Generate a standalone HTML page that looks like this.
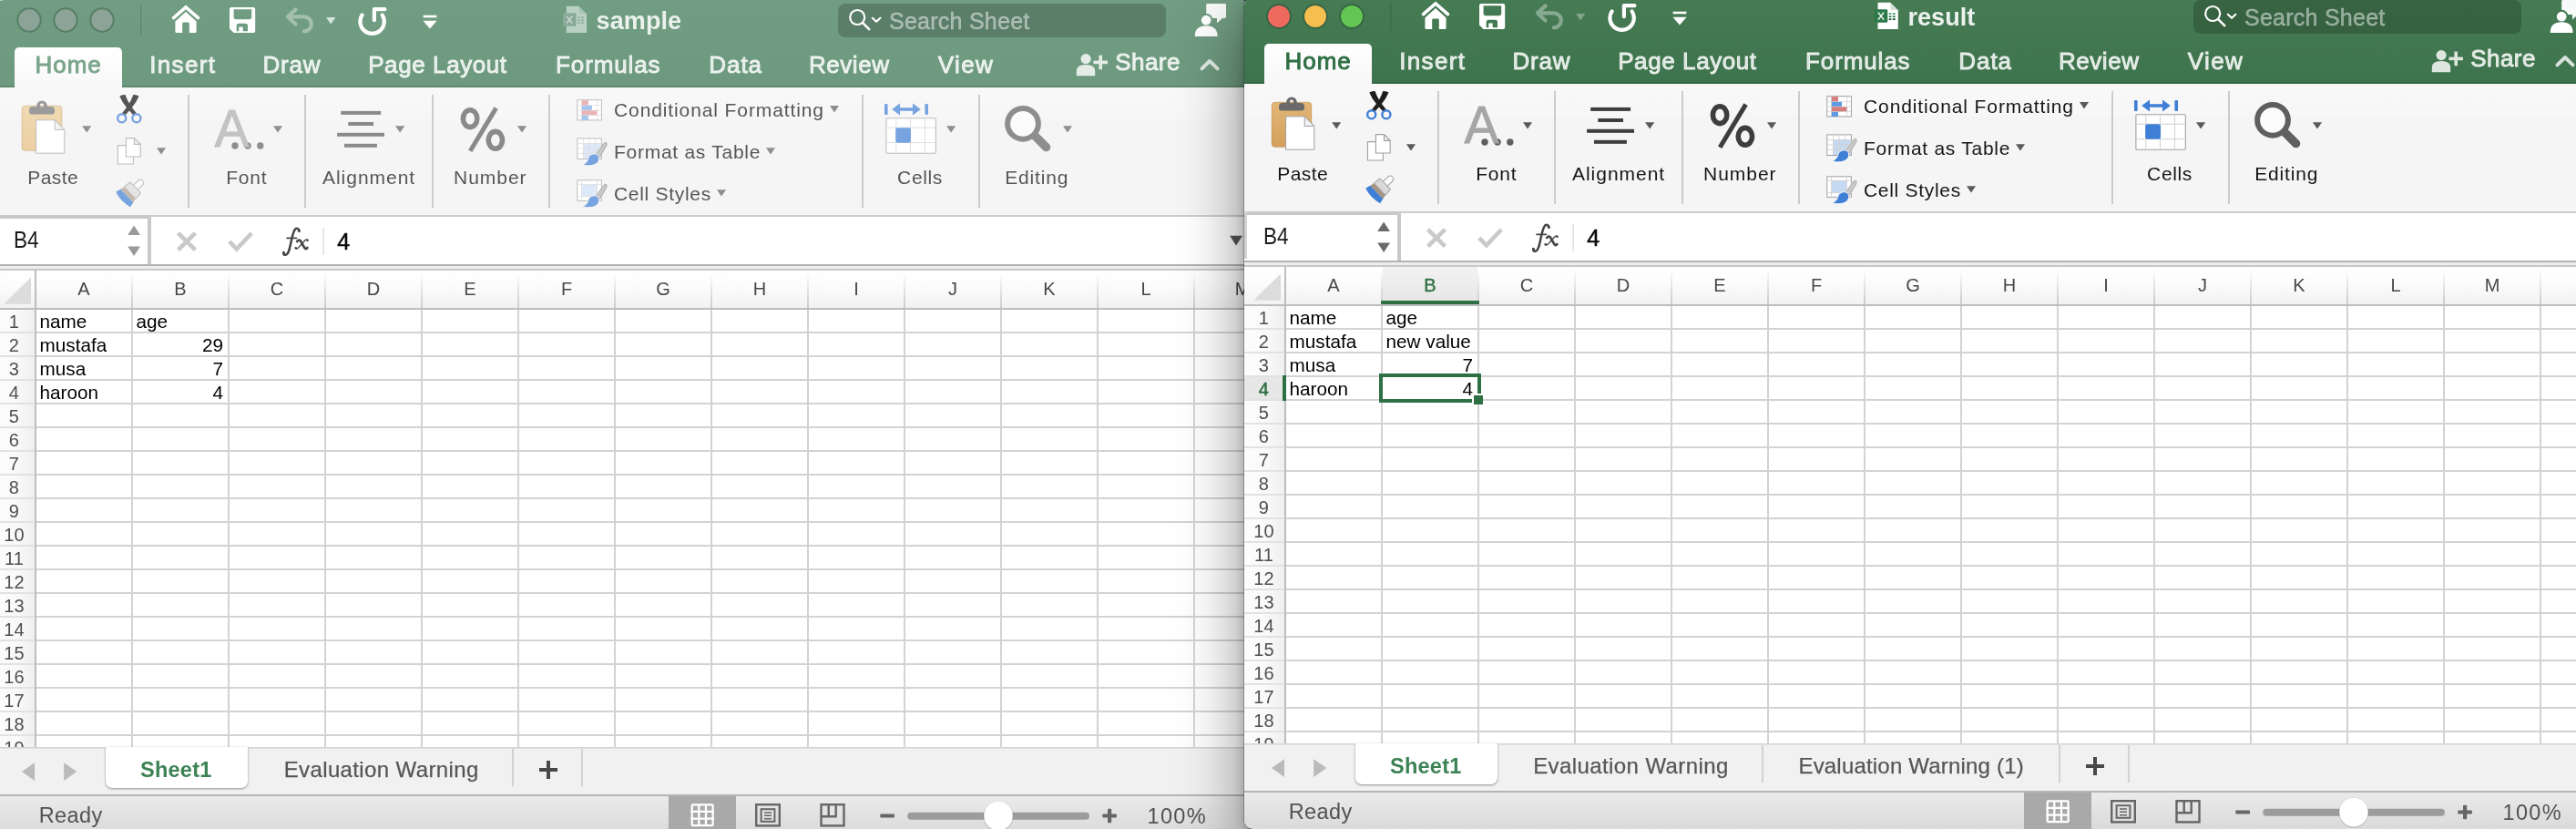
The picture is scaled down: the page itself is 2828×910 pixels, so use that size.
<!DOCTYPE html><html><head><meta charset="utf-8"><title>Excel</title><style>
html,body{margin:0;padding:0}body{width:2828px;height:910px;overflow:hidden;position:relative;background:#262c3a;font-family:"Liberation Sans",sans-serif}
.win{position:absolute;overflow:hidden;border-radius:10px;background:#fff;will-change:transform}
.win div,.win svg{box-sizing:content-box}
</style></head><body>
<div style="position:absolute;left:0;top:0;width:8px;height:8px;background:#e9e9e9"></div>
<div class="win" style="left:-6px;top:0px;width:1378px;height:914px;z-index:1;border-radius:10px 10px 0 0;">
<div style="position:absolute;left:0px;top:0px;width:1378px;height:96px;background:linear-gradient(#719d82,#6d997e);"></div>
<div style="position:absolute;left:0px;top:94px;width:1378px;height:2px;background:rgba(0,0,0,0.10);"></div>
<div style="position:absolute;left:926px;top:4px;width:360px;height:37px;background:rgba(0,0,0,0.19);border-radius:8px;"></div>
<div style="position:absolute;left:22px;top:52px;width:118px;height:45px;background:linear-gradient(#ffffff,#f7f7f7);border-radius:5px 5px 0 0;"></div>
<svg style="position:absolute;left:0;top:0" width="1378" height="96" viewBox="0 0 1378 96"><circle cx="38" cy="22" r="13.7" fill="#577f67"/><circle cx="38" cy="22" r="11.7" fill="#8ca397"/><circle cx="78" cy="22" r="13.7" fill="#577f67"/><circle cx="78" cy="22" r="11.7" fill="#8ca397"/><circle cx="118" cy="22" r="13.7" fill="#577f67"/><circle cx="118" cy="22" r="11.7" fill="#8ca397"/><rect x="160" y="6" width="1.3" height="32" fill="rgba(0,0,0,0.13)"/><path d="M196.5 19.6L210 7.9L223.5 19.6" fill="none" stroke="#ffffff" stroke-width="3.6" stroke-linecap="round" stroke-linejoin="miter"/><path d="M198.4 34.5V23.4L210 12.9L221.6 23.4V34.5Q221.6 36 220.1 36H213.8V26Q213.8 24.6 212.4 24.6H207.6Q206.2 24.6 206.2 26V36H199.9Q198.4 36 198.4 34.5Z" fill="#ffffff"/><path fill-rule="evenodd" d="M260 8H284.2Q286.2 8 286.2 10V34Q286.2 36 284.2 36H262.5L258 31.5V10Q258 8 260 8Z M262.6 10.2V18.6Q262.6 21.2 265.2 21.2H279.6Q282.2 21.2 282.2 18.6V10.2Z M265.7 34.2V28.4Q265.7 25.8 268.3 25.8H275.4Q278 25.8 278 28.4V34.2H272.7V29.6H268.3V34.2Z" fill="#ffffff"/><g opacity="0.36" fill="none" stroke="#ffffff" stroke-width="4.2" stroke-linecap="round" stroke-linejoin="round"><path d="M330.6 10.4L322 18.4L330.6 26.6M323 18.4H339.8A8 8 0 0 1 339.8 34.4"/></g><path d="M364 19H374.3L369.15 26.6Z" fill="#ffffff" fill-opacity="0.72"/><g fill="none" stroke="#ffffff" stroke-width="4.2" stroke-linecap="round" stroke-linejoin="round"><path d="M403.6 16.4A13.2 13.2 0 1 0 425.6 16.4"/><path d="M416.9 22.2V10.2H428.4"/></g><rect x="470.6" y="16.7" width="14.8" height="2.6" fill="#ffffff"/><path d="M470.4 22.8H485.6L478 31.6Z" fill="#ffffff"/><g fill="none" stroke="#ffffff" stroke-linecap="round"><circle cx="947.2" cy="19" r="8" stroke-width="2.2"/><path d="M953.2 25.2L960.2 32.2" stroke-width="2.6"/><path d="M963.8 19.8L968.1 23.8L972.4 19.8" stroke-width="2.2" stroke-linejoin="round"/></g><path d="M1331.6 4H1350.6Q1352 4 1352 5.4V18.5Q1352 19.9 1350.6 19.9H1348L1342 25.4V19.9H1331.6Q1330.2 19.9 1330.2 18.5V5.4Q1330.2 4 1331.6 4Z" fill="#ffffff" fill-opacity="0.96"/><circle cx="1330.2" cy="22.2" r="6.4" fill="#ffffff" stroke="#6f9b80" stroke-width="2"/><path d="M1317.7 39.9Q1317.7 28.2 1330.2 28.2Q1342.6 28.2 1342.6 39.9Z" fill="#ffffff"/><g fill="#ffffff" opacity="0.82"><circle cx="1198.1" cy="64.6" r="5.6"/><path d="M1187.8 83.2V78Q1187.8 71 1198.1 71Q1208.2 71 1208.2 78V83.2Z"/><rect x="1206.4" y="66.6" width="15.6" height="3.6"/><rect x="1212.4" y="60.6" width="3.6" height="15.6"/></g><path d="M1325.4 75.4L1334 67L1342.6 75.4" fill="none" stroke="#ffffff" stroke-opacity="0.8" stroke-width="3.9" stroke-linecap="round" stroke-linejoin="round"/><path d="M627.7249921875 6.8H641.5249921875001L650.0249921875001 15.3V36H627.7249921875Z" fill="#b9d1c3"/><path d="M641.5249921875001 6.8V15.3H650.0249921875001Z" fill="#6f9b80" fill-opacity="0.22"/><rect x="623.9249921875" y="14.2" width="14.6" height="14.6" rx="1.4" fill="#8aa999"/><path d="M628.1249921875001 17.6L634.3249921875 25.6M634.3249921875 17.6L628.1249921875001 25.6" stroke="#c9dbd0" stroke-width="1.5" fill="none"/><rect x="640.0" y="18.3" width="2.6" height="1.7" fill="#8fb09e"/><rect x="644.0" y="18.3" width="2.9" height="1.7" fill="#8fb09e"/><rect x="640.0" y="21.4" width="2.6" height="1.7" fill="#8fb09e"/><rect x="644.0" y="21.4" width="2.9" height="1.7" fill="#8fb09e"/><rect x="640.0" y="24.3" width="2.6" height="1.7" fill="#8fb09e"/><rect x="644.0" y="24.3" width="2.9" height="1.7" fill="#8fb09e"/></svg>
<div style="position:absolute;top:9.94px;font:700 27px/27px 'Liberation Sans',sans-serif;color:rgba(255,255,255,0.86);white-space:nowrap;letter-spacing:0.080px;left:660.62px;">sample</div>
<div style="position:absolute;top:10.84px;font:400 25px/25px 'Liberation Sans',sans-serif;color:rgba(255,255,255,0.45);white-space:nowrap;letter-spacing:0.255px;-webkit-text-stroke:0.4px rgba(255,255,255,0.45);left:982.00px;">Search Sheet</div>
<div style="position:absolute;top:57.99px;font:400 26px/26px 'Liberation Sans',sans-serif;color:#7ba58b;white-space:nowrap;letter-spacing:0.948px;-webkit-text-stroke:0.9px #7ba58b;left:44.60px;">Home</div>
<div style="position:absolute;top:57.99px;font:400 26px/26px 'Liberation Sans',sans-serif;color:rgba(255,255,255,0.80);white-space:nowrap;letter-spacing:1.335px;-webkit-text-stroke:0.9px rgba(255,255,255,0.80);left:170.20px;">Insert</div>
<div style="position:absolute;top:57.99px;font:400 26px/26px 'Liberation Sans',sans-serif;color:rgba(255,255,255,0.80);white-space:nowrap;letter-spacing:0.810px;-webkit-text-stroke:0.9px rgba(255,255,255,0.80);left:294.50px;">Draw</div>
<div style="position:absolute;top:57.99px;font:400 26px/26px 'Liberation Sans',sans-serif;color:rgba(255,255,255,0.80);white-space:nowrap;letter-spacing:0.589px;-webkit-text-stroke:0.9px rgba(255,255,255,0.80);left:410.20px;">Page Layout</div>
<div style="position:absolute;top:57.99px;font:400 26px/26px 'Liberation Sans',sans-serif;color:rgba(255,255,255,0.80);white-space:nowrap;letter-spacing:0.864px;-webkit-text-stroke:0.9px rgba(255,255,255,0.80);left:616.10px;">Formulas</div>
<div style="position:absolute;top:57.99px;font:400 26px/26px 'Liberation Sans',sans-serif;color:rgba(255,255,255,0.80);white-space:nowrap;letter-spacing:0.927px;-webkit-text-stroke:0.9px rgba(255,255,255,0.80);left:784.30px;">Data</div>
<div style="position:absolute;top:57.99px;font:400 26px/26px 'Liberation Sans',sans-serif;color:rgba(255,255,255,0.80);white-space:nowrap;letter-spacing:0.570px;-webkit-text-stroke:0.9px rgba(255,255,255,0.80);left:893.90px;">Review</div>
<div style="position:absolute;top:57.99px;font:400 26px/26px 'Liberation Sans',sans-serif;color:rgba(255,255,255,0.80);white-space:nowrap;letter-spacing:1.438px;-webkit-text-stroke:0.9px rgba(255,255,255,0.80);left:1035.70px;">View</div>
<div style="position:absolute;top:54.79px;font:400 26px/26px 'Liberation Sans',sans-serif;color:rgba(255,255,255,0.80);white-space:nowrap;letter-spacing:0.455px;-webkit-text-stroke:0.9px rgba(255,255,255,0.80);left:1230.20px;">Share</div>
<div style="position:absolute;left:0px;top:96px;width:1378px;height:140px;background:linear-gradient(#f8f8f8 0%,#f7f7f7 24%,#f5f5f5 26%,#f5f5f5 100%);"></div>
<svg style="position:absolute;left:0;top:96px" width="1378" height="140" viewBox="0 96 1378 140"><defs><linearGradient id="tan0" x1="0" y1="0" x2="0" y2="1"><stop offset="0" stop-color="#f0d9b2"/><stop offset="1" stop-color="#ebcfa2"/></linearGradient></defs><rect x="212" y="104" width="2" height="124" fill="#cccccc"/><rect x="340" y="104" width="2" height="124" fill="#cccccc"/><rect x="480" y="104" width="2" height="124" fill="#cccccc"/><rect x="608" y="104" width="2" height="124" fill="#cccccc"/><rect x="952" y="104" width="2" height="124" fill="#cccccc"/><rect x="1080" y="104" width="2" height="124" fill="#cccccc"/><rect x="30" y="116" width="44" height="49.6" rx="4" fill="url(#tan0)" stroke="rgba(120,80,20,0.18)" stroke-width="1"/><path fill-rule="evenodd" d="M38 121Q38 117 42 117H46Q46.5 110.4 52 110.4Q57.5 110.4 58 117H62Q66 117 66 121V122.5Q66 125.5 63 125.5H41Q38 125.5 38 122.5Z M52 113.4A2.1 2.1 0 1 0 52 117.6A2.1 2.1 0 1 0 52 113.4Z" fill="#9b9b9b"/><path d="M45.6 131.8H66.2L76.8 142.4V168.2H45.6Z" fill="#ffffff" stroke="#bdbdbd" stroke-width="1"/><path d="M66.2 131.8V142.4H76.8Z" fill="#f2f2f2" stroke="#bdbdbd" stroke-width="1" stroke-linejoin="round"/><path d="M96.2 138.2H106.2L101.2 145.6Z" fill="#8e8e8e"/><path d="M137.3 105.6Q140 103.600 143.5 104Q145.800 110.600 149.5 116.2L156 124.600L152.800 127L145.5 118.800Q140 112.600 137.3 105.6Z" fill="#555555"/><path d="M158.5 105.6Q155.800 103.600 152.3 104Q150 110.600 146.3 116.2L139.800 124.600L143 127L150.3 118.800Q155.800 112.600 158.5 105.6Z" fill="#555555"/><circle cx="139.7" cy="129.8" r="4.55" fill="none" stroke="#77a3e0" stroke-width="2.4"/><circle cx="155.9" cy="129.8" r="4.55" fill="none" stroke="#77a3e0" stroke-width="2.4"/><path d="M135.4 159.6H152.4V180H135.4Z" fill="#ffffff" stroke="#bdbdbd" stroke-width="1.1"/><path d="M144.4 151.6H153.4L160.2 158.4V172H144.4Z" fill="#ffffff" stroke="#bdbdbd" stroke-width="1.1"/><path d="M153.4 151.6V158.4H160.2Z" fill="#f0f0f0" stroke="#bdbdbd" stroke-width="1.1" stroke-linejoin="round"/><path d="M178 162.2H188L183.0 169.6Z" fill="#8e8e8e"/><g transform="translate(148.6 211.8) rotate(46)"><rect x="-3.4" y="-19.5" width="6.8" height="13" rx="3.4" fill="#fbfbfb" stroke="#bdbdbd" stroke-width="1"/><path d="M-7.4 -8.6H7.4Q8.4 -8.6 8.5 -7.6L9 0H-9L-8.5 -7.6Q-8.4 -8.6 -7.4 -8.6Z" fill="#e4e4e4" stroke="#bdbdbd" stroke-width="1"/><path d="M-9 0H9L10.2 4.6H-10.2Z" fill="#c4baae"/><path d="M-10.2 4.6H10.2L11.4 10.4Q0 13.8 -11.4 10.4Z" fill="#77a3e0"/></g><rect x="380.2" y="121.9" width="43.9" height="4" fill="#8a8a8a"/><rect x="388.3" y="134" width="27.7" height="4" fill="#8a8a8a"/><rect x="376.1" y="145.8" width="51.9" height="4" fill="#8a8a8a"/><rect x="384" y="157.8" width="35.9" height="4" fill="#8a8a8a"/><path d="M440 138.2H450.3L445.15 145.6Z" fill="#8e8e8e"/><circle cx="264" cy="160" r="5" fill="#f5f5f5"/><circle cx="264" cy="160" r="3.7" fill="#8e8e8e"/><circle cx="278" cy="160" r="5" fill="#f5f5f5"/><circle cx="278" cy="160" r="3.7" fill="#8e8e8e"/><circle cx="291.8" cy="160" r="5" fill="#f5f5f5"/><circle cx="291.8" cy="160" r="3.7" fill="#8e8e8e"/><path d="M306 138.2H316L311.0 145.6Z" fill="#8e8e8e"/><g fill="none" stroke="#8a8a8a"><ellipse cx="522.1" cy="130.2" rx="7.7" ry="9.4" stroke-width="5.6"/><ellipse cx="549.9" cy="153.8" rx="7.7" ry="9.4" stroke-width="5.6"/><path d="M550.6 118.6L522.2 165.8" stroke-width="5"/></g><path d="M574 138.2H584L579.0 145.6Z" fill="#8e8e8e"/><rect x="639.8" y="109.7" width="26.6" height="22.2" fill="#ffffff" stroke="#bdbdbd" stroke-width="1"/><rect x="644.4" y="110.20" width="7.6" height="5.45" fill="#ebb4b4"/><rect x="644.4" y="115.65" width="11.6" height="5.45" fill="#a6c5ee"/><rect x="644.4" y="121.10" width="17.3" height="5.45" fill="#ebb4b4"/><rect x="644.4" y="126.55" width="7.6" height="5.45" fill="#a6c5ee"/><rect x="640.3" y="115.25" width="25.6" height="0.8" fill="#dedede" fill-opacity="0.8"/><rect x="640.3" y="120.70" width="25.6" height="0.8" fill="#dedede" fill-opacity="0.8"/><rect x="640.3" y="126.15" width="25.6" height="0.8" fill="#dedede" fill-opacity="0.8"/><rect x="644.0" y="110.2" width="0.8" height="21.2" fill="#dedede" fill-opacity="0.9"/><rect x="661.4" y="110.2" width="0.8" height="21.2" fill="#dedede" fill-opacity="0.9"/><path d="M917 116H927L922.0 123.4Z" fill="#8e8e8e"/><rect x="639.8" y="151.9" width="26.6" height="22.6" fill="#ffffff" stroke="#bdbdbd" stroke-width="1"/><rect x="646.6" y="157.4" width="19.3" height="16.6" fill="#dde8f8"/><rect x="646.2" y="152.4" width="0.8" height="21.6" fill="#dedede"/><rect x="652.6" y="152.4" width="0.8" height="21.6" fill="#dedede"/><rect x="659.0" y="152.4" width="0.8" height="21.6" fill="#dedede"/><rect x="640.3" y="157.0" width="25.6" height="0.8" fill="#dedede"/><rect x="640.3" y="162.5" width="25.6" height="0.8" fill="#dedede"/><rect x="640.3" y="168.0" width="25.6" height="0.8" fill="#dedede"/><path d="M659.2 170.8L668.4 157.8Q670.4 155.6 671.6 156.6Q672.8 157.8 671.6 160.20000000000002L663.6 173.8Z" fill="#cfcfcf" stroke="#f5f5f5" stroke-width="1.4"/><path d="M659.2 170.8L668.4 157.8Q670.4 155.6 671.6 156.6Q672.8 157.8 671.6 160.20000000000002L663.6 173.8Z" fill="#c9c9c9" stroke="#9c9c9c" stroke-width="0.8"/><path d="M645 181.0Q650.6 179.0 651.6 174.4Q652.800 169.0 658.6 168.8Q663.6 169.20000000000002 663.8 174.0Q663.400 180.0 655.6 181.6Q650.2 182.4 645 181.0Z" fill="#77a3e0" stroke="#f5f5f5" stroke-width="1"/><rect x="639.8" y="197.8" width="26.6" height="22.6" fill="#ffffff" stroke="#bdbdbd" stroke-width="1"/><rect x="644.6" y="202.3" width="17" height="13.4" fill="#dde8f8"/><rect x="644.2" y="198.3" width="0.8" height="21.6" fill="#dedede"/><rect x="661.2" y="198.3" width="0.8" height="21.6" fill="#dedede"/><rect x="640.3" y="201.9" width="25.6" height="0.8" fill="#dedede"/><rect x="640.3" y="215.3" width="25.6" height="0.8" fill="#dedede"/><path d="M659.2 216.70000000000002L668.4 203.70000000000002Q670.4 201.5 671.6 202.5Q672.8 203.70000000000002 671.6 206.10000000000002L663.6 219.70000000000002Z" fill="#cfcfcf" stroke="#f5f5f5" stroke-width="1.4"/><path d="M659.2 216.70000000000002L668.4 203.70000000000002Q670.4 201.5 671.6 202.5Q672.8 203.70000000000002 671.6 206.10000000000002L663.6 219.70000000000002Z" fill="#c9c9c9" stroke="#9c9c9c" stroke-width="0.8"/><path d="M645 226.9Q650.6 224.9 651.6 220.3Q652.800 214.9 658.6 214.70000000000002Q663.6 215.10000000000002 663.8 219.9Q663.400 225.9 655.6 227.5Q650.2 228.3 645 226.9Z" fill="#77a3e0" stroke="#f5f5f5" stroke-width="1"/><path d="M847 162.2H857L852.0 169.5Z" fill="#8e8e8e"/><path d="M793 208.3H803L798.0 215.6Z" fill="#8e8e8e"/><rect x="977" y="114" width="3.6" height="12" rx="1.2" fill="#77a3e0"/><rect x="1021.4" y="114" width="3.6" height="12" rx="1.2" fill="#77a3e0"/><path d="M985.2 120L994 113.6V118.2H1008V113.6L1016.8 120L1008 126.4V121.8H994V126.4Z" fill="#77a3e0"/><rect x="978.9" y="129.8" width="54.4" height="38.4" rx="1" fill="#ffffff" stroke="#bdbdbd" stroke-width="1.1"/><rect x="989.3" y="130.4" width="1" height="37.2" fill="#dedede"/><rect x="1004.9" y="130.4" width="1" height="37.2" fill="#dedede"/><rect x="1020.9" y="130.4" width="1" height="37.2" fill="#dedede"/><rect x="979.5" y="139.7" width="53.2" height="1" fill="#dedede"/><rect x="979.5" y="156.1" width="53.2" height="1" fill="#dedede"/><rect x="989.2" y="140.2" width="16.8" height="16.6" rx="2.4" fill="#77a3e0"/><path d="M1045 138.2H1055.2L1050.1 145.6Z" fill="#8e8e8e"/><path d="M1141 148L1154.6 161.6" stroke="#8e8e8e" stroke-width="9.4" stroke-linecap="round"/><circle cx="1129" cy="135.8" r="16.9" fill="#fbfbfb" stroke="#8e8e8e" stroke-width="6"/><path d="M1173 138.2H1183L1178.0 145.6Z" fill="#8e8e8e"/></svg>
<div style="position:absolute;top:113.25px;font:400 57px/57px 'Liberation Sans',sans-serif;color:#c3c3c3;white-space:nowrap;-webkit-text-stroke:0.9px #c3c3c3;left:241.60px;">A</div>
<div style="position:absolute;top:184.02px;font:400 21px/21px 'Liberation Sans',sans-serif;color:#565656;white-space:nowrap;letter-spacing:0.475px;left:-335.76px;width:800px;text-align:center;">Paste</div>
<div style="position:absolute;top:184.02px;font:400 21px/21px 'Liberation Sans',sans-serif;color:#565656;white-space:nowrap;letter-spacing:0.793px;left:-123.20px;width:800px;text-align:center;">Font</div>
<div style="position:absolute;top:184.02px;font:400 21px/21px 'Liberation Sans',sans-serif;color:#565656;white-space:nowrap;letter-spacing:0.977px;left:11.09px;width:800px;text-align:center;">Alignment</div>
<div style="position:absolute;top:184.02px;font:400 21px/21px 'Liberation Sans',sans-serif;color:#565656;white-space:nowrap;letter-spacing:0.982px;left:144.29px;width:800px;text-align:center;">Number</div>
<div style="position:absolute;top:184.02px;font:400 21px/21px 'Liberation Sans',sans-serif;color:#565656;white-space:nowrap;letter-spacing:0.631px;left:616.02px;width:800px;text-align:center;">Cells</div>
<div style="position:absolute;top:184.02px;font:400 21px/21px 'Liberation Sans',sans-serif;color:#565656;white-space:nowrap;letter-spacing:0.832px;left:744.22px;width:800px;text-align:center;">Editing</div>
<div style="position:absolute;top:109.97px;font:400 21px/21px 'Liberation Sans',sans-serif;color:#565656;white-space:nowrap;letter-spacing:0.892px;left:680.00px;">Conditional Formatting</div>
<div style="position:absolute;top:155.92px;font:400 21px/21px 'Liberation Sans',sans-serif;color:#565656;white-space:nowrap;letter-spacing:0.730px;left:680.00px;">Format as Table</div>
<div style="position:absolute;top:201.82px;font:400 21px/21px 'Liberation Sans',sans-serif;color:#565656;white-space:nowrap;letter-spacing:0.700px;left:680.00px;">Cell Styles</div>
<div style="position:absolute;left:0px;top:236px;width:1378px;height:54px;background:#ffffff;"></div>
<div style="position:absolute;left:0px;top:236px;width:1378px;height:2px;background:#cdcdcd;"></div>
<div style="position:absolute;left:0px;top:236px;width:172px;height:4px;background:#c8c8c8;"></div>
<div style="position:absolute;left:0px;top:236px;width:2.5px;height:52px;background:#d2d2d2;"></div>
<div style="position:absolute;left:168px;top:238px;width:4px;height:52px;background:#c8c8c8;"></div>
<div style="position:absolute;left:0px;top:290px;width:1378px;height:2px;background:#b3b3b3;"></div>
<div style="position:absolute;left:0px;top:292px;width:1378px;height:3px;background:#ededed;"></div>
<div style="position:absolute;left:0px;top:295px;width:1378px;height:2px;background:#c8c8c8;"></div>
<svg style="position:absolute;left:0;top:238px" width="1378" height="52" viewBox="0 238 1378 52"><path d="M146.2 258L153.1 247.4L160 258Z" fill="#9a9a9a"/><path d="M146.2 270.4H160L153.1 281Z" fill="#9a9a9a"/><path d="M201.6 255.800L220.4 274.400M220.4 255.800L201.6 274.400" stroke="#c9c9c9" stroke-width="4.6" fill="none"/><path d="M257.8 265.2L265.8 273.4L282.2 256" stroke="#c9c9c9" stroke-width="4.6" fill="none"/><g fill="none" stroke="#454545" stroke-linecap="round" stroke-linejoin="round"><path d="M334.4 253.4C334.2 250.6 331 249.8 329.400 252.6C327.2 256.6 326.3 262 325 268C323.7 274 322.6 279.400 319.5 279.800C317.7 280 316.800 278.600 317.400 277.400" stroke-width="2.5"/><path d="M321 261.300H331.400" stroke-width="1.7"/><path d="M332.2 265C333.800 262.600 335.600 263.200 336.800 265.800L339.800 271.200C341 273.600 342.200 273.800 343.400 272" stroke-width="2.7"/><path d="M343.600 263.600C342.600 262.500 341.300 263 340 264.800L333.800 271.600C332.500 273.200 331.300 273.600 330.600 272.400" stroke-width="1.4"/></g><g fill="#454545"><circle cx="334.300" cy="253.500" r="1.500"/><circle cx="317.500" cy="277.300" r="1.500"/><circle cx="343.500" cy="263.700" r="1.300"/><circle cx="330.700" cy="272.300" r="1.300"/></g><rect x="360.4" y="250" width="1.4" height="30" fill="#dcdcdc"/><path d="M1356.1 258.800H1370L1363.05 269.6Z" fill="#555555"/></svg>
<div style="position:absolute;top:251.14px;font:400 25px/25px 'Liberation Sans',sans-serif;color:#1a1a1a;white-space:nowrap;left:20.70px;transform:scaleX(0.905);transform-origin:0 0;">B4</div>
<div style="position:absolute;top:252.54px;font:400 25px/25px 'Liberation Sans',sans-serif;color:#0a0a0a;white-space:nowrap;-webkit-text-stroke:0.5px #0a0a0a;left:376.20px;">4</div>
<div style="position:absolute;left:0;top:297px;width:1378px;height:523px;overflow:hidden;background:#fff">
<div style="position:absolute;left:0px;top:0px;width:1378px;height:41px;background:linear-gradient(#ffffff 0%,#fcfcfc 40%,#f2f2f2 100%);"></div>
<div style="position:absolute;left:44px;top:41px;width:1334px;height:482px;background-color:#fff;background-image:linear-gradient(to right,#d3d3d3 2px,transparent 2px),linear-gradient(to bottom,#d3d3d3 2px,transparent 2px);background-size:106px 100%,100% 26px;"></div>
<div style="position:absolute;left:0;top:43px;width:44px;height:480px;background-image:linear-gradient(to bottom,transparent 24px,#e2e2e2 24px),linear-gradient(to right,#fdfdfd 0%,#f9f9f9 55%,#efefef 100%);background-size:100% 26px,100% 100%;"></div>
<div style="position:absolute;left:150px;top:2px;width:2px;height:39px;background:linear-gradient(rgba(200,200,200,0) 0%,rgba(200,200,200,0.9) 100%);"></div>
<div style="position:absolute;left:256px;top:2px;width:2px;height:39px;background:linear-gradient(rgba(200,200,200,0) 0%,rgba(200,200,200,0.9) 100%);"></div>
<div style="position:absolute;left:362px;top:2px;width:2px;height:39px;background:linear-gradient(rgba(200,200,200,0) 0%,rgba(200,200,200,0.9) 100%);"></div>
<div style="position:absolute;left:468px;top:2px;width:2px;height:39px;background:linear-gradient(rgba(200,200,200,0) 0%,rgba(200,200,200,0.9) 100%);"></div>
<div style="position:absolute;left:574px;top:2px;width:2px;height:39px;background:linear-gradient(rgba(200,200,200,0) 0%,rgba(200,200,200,0.9) 100%);"></div>
<div style="position:absolute;left:680px;top:2px;width:2px;height:39px;background:linear-gradient(rgba(200,200,200,0) 0%,rgba(200,200,200,0.9) 100%);"></div>
<div style="position:absolute;left:786px;top:2px;width:2px;height:39px;background:linear-gradient(rgba(200,200,200,0) 0%,rgba(200,200,200,0.9) 100%);"></div>
<div style="position:absolute;left:892px;top:2px;width:2px;height:39px;background:linear-gradient(rgba(200,200,200,0) 0%,rgba(200,200,200,0.9) 100%);"></div>
<div style="position:absolute;left:998px;top:2px;width:2px;height:39px;background:linear-gradient(rgba(200,200,200,0) 0%,rgba(200,200,200,0.9) 100%);"></div>
<div style="position:absolute;left:1104px;top:2px;width:2px;height:39px;background:linear-gradient(rgba(200,200,200,0) 0%,rgba(200,200,200,0.9) 100%);"></div>
<div style="position:absolute;left:1210px;top:2px;width:2px;height:39px;background:linear-gradient(rgba(200,200,200,0) 0%,rgba(200,200,200,0.9) 100%);"></div>
<div style="position:absolute;left:1316px;top:2px;width:2px;height:39px;background:linear-gradient(rgba(200,200,200,0) 0%,rgba(200,200,200,0.9) 100%);"></div>
<div style="position:absolute;left:1422px;top:2px;width:2px;height:39px;background:linear-gradient(rgba(200,200,200,0) 0%,rgba(200,200,200,0.9) 100%);"></div>
<div style="position:absolute;left:0px;top:41px;width:1378px;height:2px;background:#bdbdbd;"></div>
<div style="position:absolute;left:44px;top:0px;width:2px;height:523px;background:#bdbdbd;"></div>
<svg style="position:absolute;left:0;top:0" width="46" height="41" viewBox="0 297 46 41"><path d="M40 304.6V333.800H10Z" fill="#dcdcdc"/></svg>
<div style="position:absolute;top:9.87px;font:400 20px/20px 'Liberation Sans',sans-serif;color:#484848;white-space:nowrap;left:-302.00px;width:800px;text-align:center;">A</div>
<div style="position:absolute;top:9.87px;font:400 20px/20px 'Liberation Sans',sans-serif;color:#484848;white-space:nowrap;left:-196.00px;width:800px;text-align:center;">B</div>
<div style="position:absolute;top:9.87px;font:400 20px/20px 'Liberation Sans',sans-serif;color:#484848;white-space:nowrap;left:-90.00px;width:800px;text-align:center;">C</div>
<div style="position:absolute;top:9.87px;font:400 20px/20px 'Liberation Sans',sans-serif;color:#484848;white-space:nowrap;left:16.00px;width:800px;text-align:center;">D</div>
<div style="position:absolute;top:9.87px;font:400 20px/20px 'Liberation Sans',sans-serif;color:#484848;white-space:nowrap;left:122.00px;width:800px;text-align:center;">E</div>
<div style="position:absolute;top:9.87px;font:400 20px/20px 'Liberation Sans',sans-serif;color:#484848;white-space:nowrap;left:228.00px;width:800px;text-align:center;">F</div>
<div style="position:absolute;top:9.87px;font:400 20px/20px 'Liberation Sans',sans-serif;color:#484848;white-space:nowrap;left:334.00px;width:800px;text-align:center;">G</div>
<div style="position:absolute;top:9.87px;font:400 20px/20px 'Liberation Sans',sans-serif;color:#484848;white-space:nowrap;left:440.00px;width:800px;text-align:center;">H</div>
<div style="position:absolute;top:9.87px;font:400 20px/20px 'Liberation Sans',sans-serif;color:#484848;white-space:nowrap;left:546.00px;width:800px;text-align:center;">I</div>
<div style="position:absolute;top:9.87px;font:400 20px/20px 'Liberation Sans',sans-serif;color:#484848;white-space:nowrap;left:652.00px;width:800px;text-align:center;">J</div>
<div style="position:absolute;top:9.87px;font:400 20px/20px 'Liberation Sans',sans-serif;color:#484848;white-space:nowrap;left:758.00px;width:800px;text-align:center;">K</div>
<div style="position:absolute;top:9.87px;font:400 20px/20px 'Liberation Sans',sans-serif;color:#484848;white-space:nowrap;left:864.00px;width:800px;text-align:center;">L</div>
<div style="position:absolute;top:9.87px;font:400 20px/20px 'Liberation Sans',sans-serif;color:#484848;white-space:nowrap;left:970.00px;width:800px;text-align:center;">M</div>
<div style="position:absolute;top:9.87px;font:400 20px/20px 'Liberation Sans',sans-serif;color:#484848;white-space:nowrap;left:1076.00px;width:800px;text-align:center;">N</div>
<div style="position:absolute;top:46.47px;font:400 20px/20px 'Liberation Sans',sans-serif;color:#4f4f4f;white-space:nowrap;left:-378.60px;width:800px;text-align:center;">1</div>
<div style="position:absolute;top:72.47px;font:400 20px/20px 'Liberation Sans',sans-serif;color:#4f4f4f;white-space:nowrap;left:-378.60px;width:800px;text-align:center;">2</div>
<div style="position:absolute;top:98.47px;font:400 20px/20px 'Liberation Sans',sans-serif;color:#4f4f4f;white-space:nowrap;left:-378.60px;width:800px;text-align:center;">3</div>
<div style="position:absolute;top:124.47px;font:400 20px/20px 'Liberation Sans',sans-serif;color:#4f4f4f;white-space:nowrap;left:-378.60px;width:800px;text-align:center;">4</div>
<div style="position:absolute;top:150.47px;font:400 20px/20px 'Liberation Sans',sans-serif;color:#4f4f4f;white-space:nowrap;left:-378.60px;width:800px;text-align:center;">5</div>
<div style="position:absolute;top:176.47px;font:400 20px/20px 'Liberation Sans',sans-serif;color:#4f4f4f;white-space:nowrap;left:-378.60px;width:800px;text-align:center;">6</div>
<div style="position:absolute;top:202.47px;font:400 20px/20px 'Liberation Sans',sans-serif;color:#4f4f4f;white-space:nowrap;left:-378.60px;width:800px;text-align:center;">7</div>
<div style="position:absolute;top:228.47px;font:400 20px/20px 'Liberation Sans',sans-serif;color:#4f4f4f;white-space:nowrap;left:-378.60px;width:800px;text-align:center;">8</div>
<div style="position:absolute;top:254.47px;font:400 20px/20px 'Liberation Sans',sans-serif;color:#4f4f4f;white-space:nowrap;left:-378.60px;width:800px;text-align:center;">9</div>
<div style="position:absolute;top:280.47px;font:400 20px/20px 'Liberation Sans',sans-serif;color:#4f4f4f;white-space:nowrap;left:-378.60px;width:800px;text-align:center;">10</div>
<div style="position:absolute;top:306.47px;font:400 20px/20px 'Liberation Sans',sans-serif;color:#4f4f4f;white-space:nowrap;left:-378.60px;width:800px;text-align:center;">11</div>
<div style="position:absolute;top:332.47px;font:400 20px/20px 'Liberation Sans',sans-serif;color:#4f4f4f;white-space:nowrap;left:-378.60px;width:800px;text-align:center;">12</div>
<div style="position:absolute;top:358.47px;font:400 20px/20px 'Liberation Sans',sans-serif;color:#4f4f4f;white-space:nowrap;left:-378.60px;width:800px;text-align:center;">13</div>
<div style="position:absolute;top:384.47px;font:400 20px/20px 'Liberation Sans',sans-serif;color:#4f4f4f;white-space:nowrap;left:-378.60px;width:800px;text-align:center;">14</div>
<div style="position:absolute;top:410.47px;font:400 20px/20px 'Liberation Sans',sans-serif;color:#4f4f4f;white-space:nowrap;left:-378.60px;width:800px;text-align:center;">15</div>
<div style="position:absolute;top:436.47px;font:400 20px/20px 'Liberation Sans',sans-serif;color:#4f4f4f;white-space:nowrap;left:-378.60px;width:800px;text-align:center;">16</div>
<div style="position:absolute;top:462.47px;font:400 20px/20px 'Liberation Sans',sans-serif;color:#4f4f4f;white-space:nowrap;left:-378.60px;width:800px;text-align:center;">17</div>
<div style="position:absolute;top:488.47px;font:400 20px/20px 'Liberation Sans',sans-serif;color:#4f4f4f;white-space:nowrap;left:-378.60px;width:800px;text-align:center;">18</div>
<div style="position:absolute;top:514.47px;font:400 20px/20px 'Liberation Sans',sans-serif;color:#4f4f4f;white-space:nowrap;left:-378.60px;width:800px;text-align:center;">19</div>
<div style="position:absolute;top:46.48px;font:400 20.7px/20.7px 'Liberation Sans',sans-serif;color:#000;white-space:nowrap;left:49.60px;">name</div>
<div style="position:absolute;top:46.48px;font:400 20.7px/20.7px 'Liberation Sans',sans-serif;color:#000;white-space:nowrap;left:155.60px;">age</div>
<div style="position:absolute;top:72.48px;font:400 20.7px/20.7px 'Liberation Sans',sans-serif;color:#000;white-space:nowrap;left:49.60px;">mustafa</div>
<div style="position:absolute;top:72.48px;font:400 20.7px/20.7px 'Liberation Sans',sans-serif;color:#000;white-space:nowrap;left:-549.10px;width:800px;text-align:right;">29</div>
<div style="position:absolute;top:98.48px;font:400 20.7px/20.7px 'Liberation Sans',sans-serif;color:#000;white-space:nowrap;left:49.60px;">musa</div>
<div style="position:absolute;top:98.48px;font:400 20.7px/20.7px 'Liberation Sans',sans-serif;color:#000;white-space:nowrap;left:-549.10px;width:800px;text-align:right;">7</div>
<div style="position:absolute;top:124.48px;font:400 20.7px/20.7px 'Liberation Sans',sans-serif;color:#000;white-space:nowrap;left:49.60px;">haroon</div>
<div style="position:absolute;top:124.48px;font:400 20.7px/20.7px 'Liberation Sans',sans-serif;color:#000;white-space:nowrap;left:-549.10px;width:800px;text-align:right;">4</div>
</div>
<div style="position:absolute;left:0px;top:820px;width:1378px;height:52px;background:#f1f1f1;"></div>
<div style="position:absolute;left:0px;top:820px;width:1378px;height:2px;background:linear-gradient(#cfcfcf,#e6e6e6);"></div>
<div style="position:absolute;left:121.5px;top:820px;width:156.8px;height:45px;background:#ffffff;border-radius:0 0 7px 7px;box-shadow:0 1px 2.5px rgba(0,0,0,0.38),0 0 1px rgba(0,0,0,0.25);"></div>

<svg style="position:absolute;left:0;top:820px" width="1378" height="52" viewBox="0 820 1378 52"><path d="M44 837.2V857L30 847.1Z" fill="#bababa"/><path d="M76.2 837.2V857L90.2 847.1Z" fill="#bababa"/></svg>
<div style="position:absolute;top:833.61px;font:700 23.5px/23.5px 'Liberation Sans',sans-serif;color:#3b8254;white-space:nowrap;letter-spacing:0.227px;left:160.10px;">Sheet1</div>
<div style="position:absolute;top:833.18px;font:400 24px/24px 'Liberation Sans',sans-serif;color:#565656;white-space:nowrap;letter-spacing:0.375px;-webkit-text-stroke:0.25px #565656;left:24.69px;width:800px;text-align:center;">Evaluation Warning</div>
<div style="position:absolute;left:568px;top:822px;width:2px;height:41px;background:#d2d2d2;"></div>
<div style="position:absolute;left:598.2px;top:843.2px;width:20px;height:4px;background:#484848;"></div>
<div style="position:absolute;left:606.2px;top:835.2px;width:4px;height:20px;background:#484848;"></div>
<div style="position:absolute;left:643.6px;top:822px;width:2px;height:41px;background:#d2d2d2;"></div>
<div style="position:absolute;left:0px;top:872px;width:1378px;height:42px;background:linear-gradient(#ebebeb,#dadada);"></div>
<div style="position:absolute;left:0px;top:872px;width:1378px;height:2px;background:#b4b4b4;"></div>
<div style="position:absolute;left:740px;top:874px;width:74px;height:40px;background:#a9a9a9;"></div>
<svg style="position:absolute;left:0;top:874px" width="1378" height="40" viewBox="0 874 1378 40"><g fill="none" stroke="#ffffff" stroke-width="2.3"><rect x="765.6999999999999" y="883.3" width="22.9" height="22.9" rx="1"/><path d="M773.3 883V906.5M781.0 883V906.5M764.4 890.9H789.9M764.4 898.6H789.9"/></g><g fill="none" stroke="#666666"><rect x="836.2" y="883.2" width="25.6" height="23.2" stroke-width="2.4"/><rect x="841.6" y="888.2" width="14.8" height="13.6" stroke-width="2"/><path d="M845 891.9H853M845 895.3H853M845 898.7H853" stroke-width="1.5"/></g><g fill="none" stroke="#666666" stroke-width="2.4"><rect x="907.5" y="883.2" width="25" height="23.2"/><path d="M915.6999999999999 883V896.2M923.6999999999999 883V896.2H907.5"/></g><rect x="972.3" y="893.4" width="15.7" height="4.2" rx="1" fill="#666666"/><rect x="1002.2" y="891.8" width="199.8" height="8" rx="4" fill="#9c9c9c"/><circle cx="1102" cy="896.2" r="16.6" fill="rgba(0,0,0,0.12)"/><circle cx="1102" cy="895.6" r="15.8" fill="#ffffff"/><rect x="1216.3" y="893.4" width="15.6" height="4.2" rx="1" fill="#666666"/><rect x="1222" y="887.7" width="4.2" height="15.6" rx="1" fill="#666666"/></svg>
<div style="position:absolute;top:883.91px;font:400 23.5px/23.5px 'Liberation Sans',sans-serif;color:#525252;white-space:nowrap;letter-spacing:0.392px;left:48.70px;">Ready</div>
<div style="position:absolute;top:885.31px;font:400 23.5px/23.5px 'Liberation Sans',sans-serif;color:#525252;white-space:nowrap;letter-spacing:1.332px;left:1265.50px;">100%</div>
</div>
<div class="win" style="left:1366px;top:-4px;width:1494px;height:914px;z-index:2;box-shadow:0 26px 70px rgba(0,0,0,0.46),0 5px 14px rgba(0,0,0,0.18),0 0 0 1px rgba(0,0,0,0.24);">
<div style="position:absolute;left:0px;top:0px;width:1494px;height:96px;background:linear-gradient(#467b54,#3e744d);"></div>
<div style="position:absolute;left:0px;top:94px;width:1494px;height:2px;background:rgba(0,0,0,0.10);"></div>
<div style="position:absolute;left:1042px;top:4px;width:360px;height:37px;background:rgba(0,0,0,0.19);border-radius:8px;"></div>
<div style="position:absolute;left:22px;top:52px;width:118px;height:45px;background:linear-gradient(#ffffff,#f7f7f7);border-radius:5px 5px 0 0;"></div>
<svg style="position:absolute;left:0;top:0" width="1494" height="96" viewBox="0 0 1494 96"><circle cx="38" cy="22" r="13.7" fill="rgba(0,0,0,0.2)"/><circle cx="38" cy="22" r="12" fill="#ee6a5e"/><circle cx="78" cy="22" r="13.7" fill="rgba(0,0,0,0.2)"/><circle cx="78" cy="22" r="12" fill="#f5bf4f"/><circle cx="118" cy="22" r="13.7" fill="rgba(0,0,0,0.2)"/><circle cx="118" cy="22" r="12" fill="#62c554"/><rect x="160" y="6" width="1.3" height="32" fill="rgba(0,0,0,0.13)"/><path d="M196.5 19.6L210 7.9L223.5 19.6" fill="none" stroke="#ffffff" stroke-width="3.6" stroke-linecap="round" stroke-linejoin="miter"/><path d="M198.4 34.5V23.4L210 12.9L221.6 23.4V34.5Q221.6 36 220.1 36H213.8V26Q213.8 24.6 212.4 24.6H207.6Q206.2 24.6 206.2 26V36H199.9Q198.4 36 198.4 34.5Z" fill="#ffffff"/><path fill-rule="evenodd" d="M260 8H284.2Q286.2 8 286.2 10V34Q286.2 36 284.2 36H262.5L258 31.5V10Q258 8 260 8Z M262.6 10.2V18.6Q262.6 21.2 265.2 21.2H279.6Q282.2 21.2 282.2 18.6V10.2Z M265.7 34.2V28.4Q265.7 25.8 268.3 25.8H275.4Q278 25.8 278 28.4V34.2H272.7V29.6H268.3V34.2Z" fill="#ffffff"/><g opacity="0.36" fill="none" stroke="#ffffff" stroke-width="4.2" stroke-linecap="round" stroke-linejoin="round"><path d="M330.6 10.4L322 18.4L330.6 26.6M323 18.4H339.8A8 8 0 0 1 339.8 34.4"/></g><path d="M364 19H374.3L369.15 26.6Z" fill="#ffffff" fill-opacity="0.33"/><g fill="none" stroke="#ffffff" stroke-width="4.2" stroke-linecap="round" stroke-linejoin="round"><path d="M403.6 16.4A13.2 13.2 0 1 0 425.6 16.4"/><path d="M416.9 22.2V10.2H428.4"/></g><rect x="470.6" y="16.7" width="14.8" height="2.6" fill="#ffffff"/><path d="M470.4 22.8H485.6L478 31.6Z" fill="#ffffff"/><g fill="none" stroke="#ffffff" stroke-linecap="round"><circle cx="1063.2" cy="19" r="8" stroke-width="2.2"/><path d="M1069.2 25.2L1076.2 32.2" stroke-width="2.6"/><path d="M1079.8 19.8L1084.1 23.8L1088.4 19.8" stroke-width="2.2" stroke-linejoin="round"/></g><path d="M1447.6 4H1466.6Q1468 4 1468 5.4V18.5Q1468 19.9 1466.6 19.9H1464L1458 25.4V19.9H1447.6Q1446.2 19.9 1446.2 18.5V5.4Q1446.2 4 1447.6 4Z" fill="#ffffff" fill-opacity="0.96"/><circle cx="1446.2" cy="22.2" r="6.4" fill="#ffffff" stroke="#437951" stroke-width="2"/><path d="M1433.7 39.9Q1433.7 28.2 1446.2 28.2Q1458.6 28.2 1458.6 39.9Z" fill="#ffffff"/><g fill="#ffffff" opacity="0.82"><circle cx="1314.1" cy="64.6" r="5.6"/><path d="M1303.8 83.2V78Q1303.8 71 1314.1 71Q1324.2 71 1324.2 78V83.2Z"/><rect x="1322.4" y="66.6" width="15.6" height="3.6"/><rect x="1328.4" y="60.6" width="3.6" height="15.6"/></g><path d="M1441.4 75.4L1450 67L1458.6 75.4" fill="none" stroke="#ffffff" stroke-opacity="0.8" stroke-width="3.9" stroke-linecap="round" stroke-linejoin="round"/><path d="M695.487390625 6.8H709.2873906250001L717.7873906250001 15.3V36H695.487390625Z" fill="#ffffff"/><path d="M709.2873906250001 6.8V15.3H717.7873906250001Z" fill="#437951" fill-opacity="0.22"/><rect x="691.687390625" y="14.2" width="14.6" height="14.6" rx="1.4" fill="#2c7a49"/><path d="M695.8873906250001 17.6L702.087390625 25.6M702.087390625 17.6L695.8873906250001 25.6" stroke="#ffffff" stroke-width="1.5" fill="none"/><rect x="707.8" y="18.3" width="2.6" height="1.7" fill="#3a9d68"/><rect x="711.8" y="18.3" width="2.9" height="1.7" fill="#3a9d68"/><rect x="707.8" y="21.4" width="2.6" height="1.7" fill="#1f7a45"/><rect x="711.8" y="21.4" width="2.9" height="1.7" fill="#1f7a45"/><rect x="707.8" y="24.3" width="2.6" height="1.7" fill="#0f4f2b"/><rect x="711.8" y="24.3" width="2.9" height="1.7" fill="#0f4f2b"/></svg>
<div style="position:absolute;top:9.94px;font:700 27px/27px 'Liberation Sans',sans-serif;color:rgba(255,255,255,0.9);white-space:nowrap;letter-spacing:0.080px;left:728.39px;">result</div>
<div style="position:absolute;top:10.84px;font:400 25px/25px 'Liberation Sans',sans-serif;color:rgba(255,255,255,0.45);white-space:nowrap;letter-spacing:0.255px;-webkit-text-stroke:0.4px rgba(255,255,255,0.45);left:1098.00px;">Search Sheet</div>
<div style="position:absolute;top:57.99px;font:400 26px/26px 'Liberation Sans',sans-serif;color:#2f6f44;white-space:nowrap;letter-spacing:0.948px;-webkit-text-stroke:0.9px #2f6f44;left:44.60px;">Home</div>
<div style="position:absolute;top:57.99px;font:400 26px/26px 'Liberation Sans',sans-serif;color:rgba(255,255,255,0.80);white-space:nowrap;letter-spacing:1.335px;-webkit-text-stroke:0.9px rgba(255,255,255,0.80);left:170.20px;">Insert</div>
<div style="position:absolute;top:57.99px;font:400 26px/26px 'Liberation Sans',sans-serif;color:rgba(255,255,255,0.80);white-space:nowrap;letter-spacing:0.810px;-webkit-text-stroke:0.9px rgba(255,255,255,0.80);left:294.50px;">Draw</div>
<div style="position:absolute;top:57.99px;font:400 26px/26px 'Liberation Sans',sans-serif;color:rgba(255,255,255,0.80);white-space:nowrap;letter-spacing:0.589px;-webkit-text-stroke:0.9px rgba(255,255,255,0.80);left:410.20px;">Page Layout</div>
<div style="position:absolute;top:57.99px;font:400 26px/26px 'Liberation Sans',sans-serif;color:rgba(255,255,255,0.80);white-space:nowrap;letter-spacing:0.864px;-webkit-text-stroke:0.9px rgba(255,255,255,0.80);left:616.10px;">Formulas</div>
<div style="position:absolute;top:57.99px;font:400 26px/26px 'Liberation Sans',sans-serif;color:rgba(255,255,255,0.80);white-space:nowrap;letter-spacing:0.927px;-webkit-text-stroke:0.9px rgba(255,255,255,0.80);left:784.30px;">Data</div>
<div style="position:absolute;top:57.99px;font:400 26px/26px 'Liberation Sans',sans-serif;color:rgba(255,255,255,0.80);white-space:nowrap;letter-spacing:0.570px;-webkit-text-stroke:0.9px rgba(255,255,255,0.80);left:893.90px;">Review</div>
<div style="position:absolute;top:57.99px;font:400 26px/26px 'Liberation Sans',sans-serif;color:rgba(255,255,255,0.80);white-space:nowrap;letter-spacing:1.438px;-webkit-text-stroke:0.9px rgba(255,255,255,0.80);left:1035.70px;">View</div>
<div style="position:absolute;top:54.79px;font:400 26px/26px 'Liberation Sans',sans-serif;color:rgba(255,255,255,0.80);white-space:nowrap;letter-spacing:0.455px;-webkit-text-stroke:0.9px rgba(255,255,255,0.80);left:1346.20px;">Share</div>
<div style="position:absolute;left:0px;top:96px;width:1494px;height:140px;background:linear-gradient(#f8f8f8 0%,#f7f7f7 24%,#f5f5f5 26%,#f5f5f5 100%);"></div>
<svg style="position:absolute;left:0;top:96px" width="1494" height="140" viewBox="0 96 1494 140"><defs><linearGradient id="tan1" x1="0" y1="0" x2="0" y2="1"><stop offset="0" stop-color="#e2b675"/><stop offset="1" stop-color="#d3a05c"/></linearGradient></defs><rect x="212" y="104" width="2" height="124" fill="#cccccc"/><rect x="340" y="104" width="2" height="124" fill="#cccccc"/><rect x="480" y="104" width="2" height="124" fill="#cccccc"/><rect x="608" y="104" width="2" height="124" fill="#cccccc"/><rect x="952" y="104" width="2" height="124" fill="#cccccc"/><rect x="1080" y="104" width="2" height="124" fill="#cccccc"/><rect x="30" y="116" width="44" height="49.6" rx="4" fill="url(#tan1)" stroke="rgba(120,80,20,0.18)" stroke-width="1"/><path fill-rule="evenodd" d="M38 121Q38 117 42 117H46Q46.5 110.4 52 110.4Q57.5 110.4 58 117H62Q66 117 66 121V122.5Q66 125.5 63 125.5H41Q38 125.5 38 122.5Z M52 113.4A2.1 2.1 0 1 0 52 117.6A2.1 2.1 0 1 0 52 113.4Z" fill="#6a6a6a"/><path d="M45.6 131.8H66.2L76.8 142.4V168.2H45.6Z" fill="#ffffff" stroke="#a0a0a0" stroke-width="1"/><path d="M66.2 131.8V142.4H76.8Z" fill="#f2f2f2" stroke="#a0a0a0" stroke-width="1" stroke-linejoin="round"/><path d="M96.2 138.2H106.2L101.2 145.6Z" fill="#5a5a5a"/><path d="M137.3 105.6Q140 103.600 143.5 104Q145.800 110.600 149.5 116.2L156 124.600L152.800 127L145.5 118.800Q140 112.600 137.3 105.6Z" fill="#1e1e1e"/><path d="M158.5 105.6Q155.800 103.600 152.3 104Q150 110.600 146.3 116.2L139.800 124.600L143 127L150.3 118.800Q155.800 112.600 158.5 105.6Z" fill="#1e1e1e"/><circle cx="139.7" cy="129.8" r="4.55" fill="none" stroke="#3f7fd6" stroke-width="2.4"/><circle cx="155.9" cy="129.8" r="4.55" fill="none" stroke="#3f7fd6" stroke-width="2.4"/><path d="M135.4 159.6H152.4V180H135.4Z" fill="#ffffff" stroke="#a0a0a0" stroke-width="1.1"/><path d="M144.4 151.6H153.4L160.2 158.4V172H144.4Z" fill="#ffffff" stroke="#a0a0a0" stroke-width="1.1"/><path d="M153.4 151.6V158.4H160.2Z" fill="#f0f0f0" stroke="#a0a0a0" stroke-width="1.1" stroke-linejoin="round"/><path d="M178 162.2H188L183.0 169.6Z" fill="#5a5a5a"/><g transform="translate(148.6 211.8) rotate(46)"><rect x="-3.4" y="-19.5" width="6.8" height="13" rx="3.4" fill="#fbfbfb" stroke="#a0a0a0" stroke-width="1"/><path d="M-7.4 -8.6H7.4Q8.4 -8.6 8.5 -7.6L9 0H-9L-8.5 -7.6Q-8.4 -8.6 -7.4 -8.6Z" fill="#d8d8d8" stroke="#a0a0a0" stroke-width="1"/><path d="M-9 0H9L10.2 4.6H-10.2Z" fill="#a59683"/><path d="M-10.2 4.6H10.2L11.4 10.4Q0 13.8 -11.4 10.4Z" fill="#3f7fd6"/></g><rect x="380.2" y="121.9" width="43.9" height="4" fill="#3d3d3d"/><rect x="388.3" y="134" width="27.7" height="4" fill="#3d3d3d"/><rect x="376.1" y="145.8" width="51.9" height="4" fill="#3d3d3d"/><rect x="384" y="157.8" width="35.9" height="4" fill="#3d3d3d"/><path d="M440 138.2H450.3L445.15 145.6Z" fill="#5a5a5a"/><circle cx="264" cy="160" r="5" fill="#f5f5f5"/><circle cx="264" cy="160" r="3.7" fill="#5f5f5f"/><circle cx="278" cy="160" r="5" fill="#f5f5f5"/><circle cx="278" cy="160" r="3.7" fill="#5f5f5f"/><circle cx="291.8" cy="160" r="5" fill="#f5f5f5"/><circle cx="291.8" cy="160" r="3.7" fill="#5f5f5f"/><path d="M306 138.2H316L311.0 145.6Z" fill="#5a5a5a"/><g fill="none" stroke="#3d3d3d"><ellipse cx="522.1" cy="130.2" rx="7.7" ry="9.4" stroke-width="5.6"/><ellipse cx="549.9" cy="153.8" rx="7.7" ry="9.4" stroke-width="5.6"/><path d="M550.6 118.6L522.2 165.8" stroke-width="5"/></g><path d="M574 138.2H584L579.0 145.6Z" fill="#5a5a5a"/><rect x="639.8" y="109.7" width="26.6" height="22.2" fill="#ffffff" stroke="#a0a0a0" stroke-width="1"/><rect x="644.4" y="110.20" width="7.6" height="5.45" fill="#d97b7b"/><rect x="644.4" y="115.65" width="11.6" height="5.45" fill="#5c9ae2"/><rect x="644.4" y="121.10" width="17.3" height="5.45" fill="#d97b7b"/><rect x="644.4" y="126.55" width="7.6" height="5.45" fill="#5c9ae2"/><rect x="640.3" y="115.25" width="25.6" height="0.8" fill="#d0d0d0" fill-opacity="0.8"/><rect x="640.3" y="120.70" width="25.6" height="0.8" fill="#d0d0d0" fill-opacity="0.8"/><rect x="640.3" y="126.15" width="25.6" height="0.8" fill="#d0d0d0" fill-opacity="0.8"/><rect x="644.0" y="110.2" width="0.8" height="21.2" fill="#d0d0d0" fill-opacity="0.9"/><rect x="661.4" y="110.2" width="0.8" height="21.2" fill="#d0d0d0" fill-opacity="0.9"/><path d="M917 116H927L922.0 123.4Z" fill="#5a5a5a"/><rect x="639.8" y="151.9" width="26.6" height="22.6" fill="#ffffff" stroke="#a0a0a0" stroke-width="1"/><rect x="646.6" y="157.4" width="19.3" height="16.6" fill="#c6d9f3"/><rect x="646.2" y="152.4" width="0.8" height="21.6" fill="#d0d0d0"/><rect x="652.6" y="152.4" width="0.8" height="21.6" fill="#d0d0d0"/><rect x="659.0" y="152.4" width="0.8" height="21.6" fill="#d0d0d0"/><rect x="640.3" y="157.0" width="25.6" height="0.8" fill="#d0d0d0"/><rect x="640.3" y="162.5" width="25.6" height="0.8" fill="#d0d0d0"/><rect x="640.3" y="168.0" width="25.6" height="0.8" fill="#d0d0d0"/><path d="M659.2 170.8L668.4 157.8Q670.4 155.6 671.6 156.6Q672.8 157.8 671.6 160.20000000000002L663.6 173.8Z" fill="#cfcfcf" stroke="#f5f5f5" stroke-width="1.4"/><path d="M659.2 170.8L668.4 157.8Q670.4 155.6 671.6 156.6Q672.8 157.8 671.6 160.20000000000002L663.6 173.8Z" fill="#c9c9c9" stroke="#9c9c9c" stroke-width="0.8"/><path d="M645 181.0Q650.6 179.0 651.6 174.4Q652.800 169.0 658.6 168.8Q663.6 169.20000000000002 663.8 174.0Q663.400 180.0 655.6 181.6Q650.2 182.4 645 181.0Z" fill="#3f7fd6" stroke="#f5f5f5" stroke-width="1"/><rect x="639.8" y="197.8" width="26.6" height="22.6" fill="#ffffff" stroke="#a0a0a0" stroke-width="1"/><rect x="644.6" y="202.3" width="17" height="13.4" fill="#c6d9f3"/><rect x="644.2" y="198.3" width="0.8" height="21.6" fill="#d0d0d0"/><rect x="661.2" y="198.3" width="0.8" height="21.6" fill="#d0d0d0"/><rect x="640.3" y="201.9" width="25.6" height="0.8" fill="#d0d0d0"/><rect x="640.3" y="215.3" width="25.6" height="0.8" fill="#d0d0d0"/><path d="M659.2 216.70000000000002L668.4 203.70000000000002Q670.4 201.5 671.6 202.5Q672.8 203.70000000000002 671.6 206.10000000000002L663.6 219.70000000000002Z" fill="#cfcfcf" stroke="#f5f5f5" stroke-width="1.4"/><path d="M659.2 216.70000000000002L668.4 203.70000000000002Q670.4 201.5 671.6 202.5Q672.8 203.70000000000002 671.6 206.10000000000002L663.6 219.70000000000002Z" fill="#c9c9c9" stroke="#9c9c9c" stroke-width="0.8"/><path d="M645 226.9Q650.6 224.9 651.6 220.3Q652.800 214.9 658.6 214.70000000000002Q663.6 215.10000000000002 663.8 219.9Q663.400 225.9 655.6 227.5Q650.2 228.3 645 226.9Z" fill="#3f7fd6" stroke="#f5f5f5" stroke-width="1"/><path d="M847 162.2H857L852.0 169.5Z" fill="#5a5a5a"/><path d="M793 208.3H803L798.0 215.6Z" fill="#5a5a5a"/><rect x="977" y="114" width="3.6" height="12" rx="1.2" fill="#3f7fd6"/><rect x="1021.4" y="114" width="3.6" height="12" rx="1.2" fill="#3f7fd6"/><path d="M985.2 120L994 113.6V118.2H1008V113.6L1016.8 120L1008 126.4V121.8H994V126.4Z" fill="#3f7fd6"/><rect x="978.9" y="129.8" width="54.4" height="38.4" rx="1" fill="#ffffff" stroke="#a0a0a0" stroke-width="1.1"/><rect x="989.3" y="130.4" width="1" height="37.2" fill="#d0d0d0"/><rect x="1004.9" y="130.4" width="1" height="37.2" fill="#d0d0d0"/><rect x="1020.9" y="130.4" width="1" height="37.2" fill="#d0d0d0"/><rect x="979.5" y="139.7" width="53.2" height="1" fill="#d0d0d0"/><rect x="979.5" y="156.1" width="53.2" height="1" fill="#d0d0d0"/><rect x="989.2" y="140.2" width="16.8" height="16.6" rx="2.4" fill="#3f7fd6"/><path d="M1045 138.2H1055.2L1050.1 145.6Z" fill="#5a5a5a"/><path d="M1141 148L1154.6 161.6" stroke="#5f5f5f" stroke-width="9.4" stroke-linecap="round"/><circle cx="1129" cy="135.8" r="16.9" fill="#fbfbfb" stroke="#5f5f5f" stroke-width="6"/><path d="M1173 138.2H1183L1178.0 145.6Z" fill="#5a5a5a"/></svg>
<div style="position:absolute;top:113.25px;font:400 57px/57px 'Liberation Sans',sans-serif;color:#a6a6a6;white-space:nowrap;-webkit-text-stroke:0.9px #a6a6a6;left:241.60px;">A</div>
<div style="position:absolute;top:184.02px;font:400 21px/21px 'Liberation Sans',sans-serif;color:#161616;white-space:nowrap;letter-spacing:0.475px;left:-335.76px;width:800px;text-align:center;">Paste</div>
<div style="position:absolute;top:184.02px;font:400 21px/21px 'Liberation Sans',sans-serif;color:#161616;white-space:nowrap;letter-spacing:0.793px;left:-123.20px;width:800px;text-align:center;">Font</div>
<div style="position:absolute;top:184.02px;font:400 21px/21px 'Liberation Sans',sans-serif;color:#161616;white-space:nowrap;letter-spacing:0.977px;left:11.09px;width:800px;text-align:center;">Alignment</div>
<div style="position:absolute;top:184.02px;font:400 21px/21px 'Liberation Sans',sans-serif;color:#161616;white-space:nowrap;letter-spacing:0.982px;left:144.29px;width:800px;text-align:center;">Number</div>
<div style="position:absolute;top:184.02px;font:400 21px/21px 'Liberation Sans',sans-serif;color:#161616;white-space:nowrap;letter-spacing:0.631px;left:616.02px;width:800px;text-align:center;">Cells</div>
<div style="position:absolute;top:184.02px;font:400 21px/21px 'Liberation Sans',sans-serif;color:#161616;white-space:nowrap;letter-spacing:0.832px;left:744.22px;width:800px;text-align:center;">Editing</div>
<div style="position:absolute;top:109.97px;font:400 21px/21px 'Liberation Sans',sans-serif;color:#161616;white-space:nowrap;letter-spacing:0.892px;left:680.00px;">Conditional Formatting</div>
<div style="position:absolute;top:155.92px;font:400 21px/21px 'Liberation Sans',sans-serif;color:#161616;white-space:nowrap;letter-spacing:0.730px;left:680.00px;">Format as Table</div>
<div style="position:absolute;top:201.82px;font:400 21px/21px 'Liberation Sans',sans-serif;color:#161616;white-space:nowrap;letter-spacing:0.700px;left:680.00px;">Cell Styles</div>
<div style="position:absolute;left:0px;top:236px;width:1494px;height:54px;background:#ffffff;"></div>
<div style="position:absolute;left:0px;top:236px;width:1494px;height:2px;background:#cdcdcd;"></div>
<div style="position:absolute;left:0px;top:236px;width:172px;height:4px;background:#c8c8c8;"></div>
<div style="position:absolute;left:0px;top:236px;width:2.5px;height:52px;background:#d2d2d2;"></div>
<div style="position:absolute;left:168px;top:238px;width:4px;height:52px;background:#c8c8c8;"></div>
<div style="position:absolute;left:0px;top:290px;width:1494px;height:2px;background:#b3b3b3;"></div>
<div style="position:absolute;left:0px;top:292px;width:1494px;height:3px;background:#ededed;"></div>
<div style="position:absolute;left:0px;top:295px;width:1494px;height:2px;background:#c8c8c8;"></div>
<svg style="position:absolute;left:0;top:238px" width="1494" height="52" viewBox="0 238 1494 52"><path d="M146.2 258L153.1 247.4L160 258Z" fill="#6a6a6a"/><path d="M146.2 270.4H160L153.1 281Z" fill="#6a6a6a"/><path d="M201.6 255.800L220.4 274.400M220.4 255.800L201.6 274.400" stroke="#c9c9c9" stroke-width="4.6" fill="none"/><path d="M257.8 265.2L265.8 273.4L282.2 256" stroke="#c9c9c9" stroke-width="4.6" fill="none"/><g fill="none" stroke="#454545" stroke-linecap="round" stroke-linejoin="round"><path d="M334.4 253.4C334.2 250.6 331 249.8 329.400 252.6C327.2 256.6 326.3 262 325 268C323.7 274 322.6 279.400 319.5 279.800C317.7 280 316.800 278.600 317.400 277.400" stroke-width="2.5"/><path d="M321 261.300H331.400" stroke-width="1.7"/><path d="M332.2 265C333.800 262.600 335.600 263.200 336.800 265.800L339.800 271.200C341 273.600 342.200 273.800 343.400 272" stroke-width="2.7"/><path d="M343.600 263.600C342.600 262.500 341.300 263 340 264.800L333.800 271.600C332.500 273.200 331.300 273.600 330.600 272.400" stroke-width="1.4"/></g><g fill="#454545"><circle cx="334.300" cy="253.500" r="1.500"/><circle cx="317.500" cy="277.300" r="1.500"/><circle cx="343.500" cy="263.700" r="1.300"/><circle cx="330.700" cy="272.300" r="1.300"/></g><rect x="360.4" y="250" width="1.4" height="30" fill="#dcdcdc"/><path d="M1472.1 258.800H1486L1479.05 269.6Z" fill="#555555"/></svg>
<div style="position:absolute;top:251.14px;font:400 25px/25px 'Liberation Sans',sans-serif;color:#1a1a1a;white-space:nowrap;left:20.70px;transform:scaleX(0.905);transform-origin:0 0;">B4</div>
<div style="position:absolute;top:252.54px;font:400 25px/25px 'Liberation Sans',sans-serif;color:#0a0a0a;white-space:nowrap;-webkit-text-stroke:0.5px #0a0a0a;left:376.20px;">4</div>
<div style="position:absolute;left:0;top:297px;width:1494px;height:523px;overflow:hidden;background:#fff">
<div style="position:absolute;left:0px;top:0px;width:1494px;height:41px;background:linear-gradient(#ffffff 0%,#fcfcfc 40%,#f2f2f2 100%);"></div>
<div style="position:absolute;left:44px;top:41px;width:1450px;height:482px;background-color:#fff;background-image:linear-gradient(to right,#d3d3d3 2px,transparent 2px),linear-gradient(to bottom,#d3d3d3 2px,transparent 2px);background-size:106px 100%,100% 26px;"></div>
<div style="position:absolute;left:0;top:43px;width:44px;height:480px;background-image:linear-gradient(to bottom,transparent 24px,#e2e2e2 24px),linear-gradient(to right,#fdfdfd 0%,#f9f9f9 55%,#efefef 100%);background-size:100% 26px,100% 100%;"></div>
<div style="position:absolute;left:150px;top:2px;width:2px;height:39px;background:linear-gradient(rgba(200,200,200,0) 0%,rgba(200,200,200,0.9) 100%);"></div>
<div style="position:absolute;left:256px;top:2px;width:2px;height:39px;background:linear-gradient(rgba(200,200,200,0) 0%,rgba(200,200,200,0.9) 100%);"></div>
<div style="position:absolute;left:362px;top:2px;width:2px;height:39px;background:linear-gradient(rgba(200,200,200,0) 0%,rgba(200,200,200,0.9) 100%);"></div>
<div style="position:absolute;left:468px;top:2px;width:2px;height:39px;background:linear-gradient(rgba(200,200,200,0) 0%,rgba(200,200,200,0.9) 100%);"></div>
<div style="position:absolute;left:574px;top:2px;width:2px;height:39px;background:linear-gradient(rgba(200,200,200,0) 0%,rgba(200,200,200,0.9) 100%);"></div>
<div style="position:absolute;left:680px;top:2px;width:2px;height:39px;background:linear-gradient(rgba(200,200,200,0) 0%,rgba(200,200,200,0.9) 100%);"></div>
<div style="position:absolute;left:786px;top:2px;width:2px;height:39px;background:linear-gradient(rgba(200,200,200,0) 0%,rgba(200,200,200,0.9) 100%);"></div>
<div style="position:absolute;left:892px;top:2px;width:2px;height:39px;background:linear-gradient(rgba(200,200,200,0) 0%,rgba(200,200,200,0.9) 100%);"></div>
<div style="position:absolute;left:998px;top:2px;width:2px;height:39px;background:linear-gradient(rgba(200,200,200,0) 0%,rgba(200,200,200,0.9) 100%);"></div>
<div style="position:absolute;left:1104px;top:2px;width:2px;height:39px;background:linear-gradient(rgba(200,200,200,0) 0%,rgba(200,200,200,0.9) 100%);"></div>
<div style="position:absolute;left:1210px;top:2px;width:2px;height:39px;background:linear-gradient(rgba(200,200,200,0) 0%,rgba(200,200,200,0.9) 100%);"></div>
<div style="position:absolute;left:1316px;top:2px;width:2px;height:39px;background:linear-gradient(rgba(200,200,200,0) 0%,rgba(200,200,200,0.9) 100%);"></div>
<div style="position:absolute;left:1422px;top:2px;width:2px;height:39px;background:linear-gradient(rgba(200,200,200,0) 0%,rgba(200,200,200,0.9) 100%);"></div>
<div style="position:absolute;left:1528px;top:2px;width:2px;height:39px;background:linear-gradient(rgba(200,200,200,0) 0%,rgba(200,200,200,0.9) 100%);"></div>
<div style="position:absolute;left:152px;top:0px;width:104px;height:41px;background:linear-gradient(#f2f2f2,#e6e6e6);"></div>
<div style="position:absolute;left:0px;top:121px;width:44px;height:24px;background:#e7e7e7;"></div>
<div style="position:absolute;left:0px;top:41px;width:1494px;height:2px;background:#bdbdbd;"></div>
<div style="position:absolute;left:44px;top:0px;width:2px;height:523px;background:#bdbdbd;"></div>
<svg style="position:absolute;left:0;top:0" width="46" height="41" viewBox="0 297 46 41"><path d="M40 304.6V333.800H10Z" fill="#dcdcdc"/></svg>
<div style="position:absolute;left:150px;top:37px;width:108px;height:4px;background:#2f6f44;"></div>
<div style="position:absolute;left:42px;top:119px;width:4px;height:28px;background:#2f6f44;"></div>
<div style="position:absolute;top:9.87px;font:400 20px/20px 'Liberation Sans',sans-serif;color:#484848;white-space:nowrap;left:-302.00px;width:800px;text-align:center;">A</div>
<div style="position:absolute;top:9.87px;font:400 20px/20px 'Liberation Sans',sans-serif;color:#2f6f44;white-space:nowrap;-webkit-text-stroke:0.4px #2f6f44;left:-196.00px;width:800px;text-align:center;">B</div>
<div style="position:absolute;top:9.87px;font:400 20px/20px 'Liberation Sans',sans-serif;color:#484848;white-space:nowrap;left:-90.00px;width:800px;text-align:center;">C</div>
<div style="position:absolute;top:9.87px;font:400 20px/20px 'Liberation Sans',sans-serif;color:#484848;white-space:nowrap;left:16.00px;width:800px;text-align:center;">D</div>
<div style="position:absolute;top:9.87px;font:400 20px/20px 'Liberation Sans',sans-serif;color:#484848;white-space:nowrap;left:122.00px;width:800px;text-align:center;">E</div>
<div style="position:absolute;top:9.87px;font:400 20px/20px 'Liberation Sans',sans-serif;color:#484848;white-space:nowrap;left:228.00px;width:800px;text-align:center;">F</div>
<div style="position:absolute;top:9.87px;font:400 20px/20px 'Liberation Sans',sans-serif;color:#484848;white-space:nowrap;left:334.00px;width:800px;text-align:center;">G</div>
<div style="position:absolute;top:9.87px;font:400 20px/20px 'Liberation Sans',sans-serif;color:#484848;white-space:nowrap;left:440.00px;width:800px;text-align:center;">H</div>
<div style="position:absolute;top:9.87px;font:400 20px/20px 'Liberation Sans',sans-serif;color:#484848;white-space:nowrap;left:546.00px;width:800px;text-align:center;">I</div>
<div style="position:absolute;top:9.87px;font:400 20px/20px 'Liberation Sans',sans-serif;color:#484848;white-space:nowrap;left:652.00px;width:800px;text-align:center;">J</div>
<div style="position:absolute;top:9.87px;font:400 20px/20px 'Liberation Sans',sans-serif;color:#484848;white-space:nowrap;left:758.00px;width:800px;text-align:center;">K</div>
<div style="position:absolute;top:9.87px;font:400 20px/20px 'Liberation Sans',sans-serif;color:#484848;white-space:nowrap;left:864.00px;width:800px;text-align:center;">L</div>
<div style="position:absolute;top:9.87px;font:400 20px/20px 'Liberation Sans',sans-serif;color:#484848;white-space:nowrap;left:970.00px;width:800px;text-align:center;">M</div>
<div style="position:absolute;top:9.87px;font:400 20px/20px 'Liberation Sans',sans-serif;color:#484848;white-space:nowrap;left:1076.00px;width:800px;text-align:center;">N</div>
<div style="position:absolute;top:9.87px;font:400 20px/20px 'Liberation Sans',sans-serif;color:#484848;white-space:nowrap;left:1182.00px;width:800px;text-align:center;">O</div>
<div style="position:absolute;top:46.47px;font:400 20px/20px 'Liberation Sans',sans-serif;color:#4f4f4f;white-space:nowrap;left:-378.60px;width:800px;text-align:center;">1</div>
<div style="position:absolute;top:72.47px;font:400 20px/20px 'Liberation Sans',sans-serif;color:#4f4f4f;white-space:nowrap;left:-378.60px;width:800px;text-align:center;">2</div>
<div style="position:absolute;top:98.47px;font:400 20px/20px 'Liberation Sans',sans-serif;color:#4f4f4f;white-space:nowrap;left:-378.60px;width:800px;text-align:center;">3</div>
<div style="position:absolute;top:124.47px;font:400 20px/20px 'Liberation Sans',sans-serif;color:#2f6f44;white-space:nowrap;-webkit-text-stroke:0.5px #2f6f44;left:-378.60px;width:800px;text-align:center;">4</div>
<div style="position:absolute;top:150.47px;font:400 20px/20px 'Liberation Sans',sans-serif;color:#4f4f4f;white-space:nowrap;left:-378.60px;width:800px;text-align:center;">5</div>
<div style="position:absolute;top:176.47px;font:400 20px/20px 'Liberation Sans',sans-serif;color:#4f4f4f;white-space:nowrap;left:-378.60px;width:800px;text-align:center;">6</div>
<div style="position:absolute;top:202.47px;font:400 20px/20px 'Liberation Sans',sans-serif;color:#4f4f4f;white-space:nowrap;left:-378.60px;width:800px;text-align:center;">7</div>
<div style="position:absolute;top:228.47px;font:400 20px/20px 'Liberation Sans',sans-serif;color:#4f4f4f;white-space:nowrap;left:-378.60px;width:800px;text-align:center;">8</div>
<div style="position:absolute;top:254.47px;font:400 20px/20px 'Liberation Sans',sans-serif;color:#4f4f4f;white-space:nowrap;left:-378.60px;width:800px;text-align:center;">9</div>
<div style="position:absolute;top:280.47px;font:400 20px/20px 'Liberation Sans',sans-serif;color:#4f4f4f;white-space:nowrap;left:-378.60px;width:800px;text-align:center;">10</div>
<div style="position:absolute;top:306.47px;font:400 20px/20px 'Liberation Sans',sans-serif;color:#4f4f4f;white-space:nowrap;left:-378.60px;width:800px;text-align:center;">11</div>
<div style="position:absolute;top:332.47px;font:400 20px/20px 'Liberation Sans',sans-serif;color:#4f4f4f;white-space:nowrap;left:-378.60px;width:800px;text-align:center;">12</div>
<div style="position:absolute;top:358.47px;font:400 20px/20px 'Liberation Sans',sans-serif;color:#4f4f4f;white-space:nowrap;left:-378.60px;width:800px;text-align:center;">13</div>
<div style="position:absolute;top:384.47px;font:400 20px/20px 'Liberation Sans',sans-serif;color:#4f4f4f;white-space:nowrap;left:-378.60px;width:800px;text-align:center;">14</div>
<div style="position:absolute;top:410.47px;font:400 20px/20px 'Liberation Sans',sans-serif;color:#4f4f4f;white-space:nowrap;left:-378.60px;width:800px;text-align:center;">15</div>
<div style="position:absolute;top:436.47px;font:400 20px/20px 'Liberation Sans',sans-serif;color:#4f4f4f;white-space:nowrap;left:-378.60px;width:800px;text-align:center;">16</div>
<div style="position:absolute;top:462.47px;font:400 20px/20px 'Liberation Sans',sans-serif;color:#4f4f4f;white-space:nowrap;left:-378.60px;width:800px;text-align:center;">17</div>
<div style="position:absolute;top:488.47px;font:400 20px/20px 'Liberation Sans',sans-serif;color:#4f4f4f;white-space:nowrap;left:-378.60px;width:800px;text-align:center;">18</div>
<div style="position:absolute;top:514.47px;font:400 20px/20px 'Liberation Sans',sans-serif;color:#4f4f4f;white-space:nowrap;left:-378.60px;width:800px;text-align:center;">19</div>
<div style="position:absolute;top:46.48px;font:400 20.7px/20.7px 'Liberation Sans',sans-serif;color:#000;white-space:nowrap;left:49.60px;">name</div>
<div style="position:absolute;top:46.48px;font:400 20.7px/20.7px 'Liberation Sans',sans-serif;color:#000;white-space:nowrap;left:155.60px;">age</div>
<div style="position:absolute;top:72.48px;font:400 20.7px/20.7px 'Liberation Sans',sans-serif;color:#000;white-space:nowrap;left:49.60px;">mustafa</div>
<div style="position:absolute;top:72.48px;font:400 20.7px/20.7px 'Liberation Sans',sans-serif;color:#000;white-space:nowrap;left:155.60px;">new value</div>
<div style="position:absolute;top:98.48px;font:400 20.7px/20.7px 'Liberation Sans',sans-serif;color:#000;white-space:nowrap;left:49.60px;">musa</div>
<div style="position:absolute;top:98.48px;font:400 20.7px/20.7px 'Liberation Sans',sans-serif;color:#000;white-space:nowrap;left:-549.10px;width:800px;text-align:right;">7</div>
<div style="position:absolute;top:124.48px;font:400 20.7px/20.7px 'Liberation Sans',sans-serif;color:#000;white-space:nowrap;left:49.60px;">haroon</div>
<div style="position:absolute;top:124.48px;font:400 20.7px/20.7px 'Liberation Sans',sans-serif;color:#000;white-space:nowrap;left:-549.10px;width:800px;text-align:right;">4</div>
<div style="position:absolute;left:148px;top:117px;width:104px;height:24px;border:4px solid #2f6f44;"></div>
<div style="position:absolute;left:250px;top:139px;width:12px;height:12px;background:#ffffff;"></div>
<div style="position:absolute;left:252px;top:141px;width:10px;height:10px;background:#2f6f44;"></div>
</div>
<div style="position:absolute;left:0px;top:820px;width:1494px;height:52px;background:#f1f1f1;"></div>
<div style="position:absolute;left:0px;top:820px;width:1494px;height:2px;background:linear-gradient(#cfcfcf,#e6e6e6);"></div>
<div style="position:absolute;left:121.5px;top:820px;width:156.8px;height:45px;background:#ffffff;border-radius:0 0 7px 7px;box-shadow:0 1px 2.5px rgba(0,0,0,0.38),0 0 1px rgba(0,0,0,0.25);"></div>

<svg style="position:absolute;left:0;top:820px" width="1494" height="52" viewBox="0 820 1494 52"><path d="M44 837.2V857L30 847.1Z" fill="#bababa"/><path d="M76.2 837.2V857L90.2 847.1Z" fill="#bababa"/></svg>
<div style="position:absolute;top:833.61px;font:700 23.5px/23.5px 'Liberation Sans',sans-serif;color:#3b8254;white-space:nowrap;letter-spacing:0.227px;left:160.10px;">Sheet1</div>
<div style="position:absolute;top:833.18px;font:400 24px/24px 'Liberation Sans',sans-serif;color:#565656;white-space:nowrap;letter-spacing:0.410px;-webkit-text-stroke:0.25px #565656;left:24.51px;width:800px;text-align:center;">Evaluation Warning</div>
<div style="position:absolute;left:567.8px;top:822px;width:2px;height:41px;background:#d2d2d2;"></div>
<div style="position:absolute;top:833.18px;font:400 24px/24px 'Liberation Sans',sans-serif;color:#565656;white-space:nowrap;letter-spacing:0.194px;-webkit-text-stroke:0.25px #565656;left:332.20px;width:800px;text-align:center;">Evaluation Warning (1)</div>
<div style="position:absolute;left:894px;top:822px;width:2px;height:41px;background:#d2d2d2;"></div>
<div style="position:absolute;left:924px;top:843.2px;width:20px;height:4px;background:#484848;"></div>
<div style="position:absolute;left:932px;top:835.2px;width:4px;height:20px;background:#484848;"></div>
<div style="position:absolute;left:969.8px;top:822px;width:2px;height:41px;background:#d2d2d2;"></div>
<div style="position:absolute;left:0px;top:872px;width:1494px;height:42px;background:linear-gradient(#ebebeb,#dadada);"></div>
<div style="position:absolute;left:0px;top:872px;width:1494px;height:2px;background:#b4b4b4;"></div>
<div style="position:absolute;left:856px;top:874px;width:74px;height:40px;background:#a9a9a9;"></div>
<svg style="position:absolute;left:0;top:874px" width="1494" height="40" viewBox="0 874 1494 40"><g fill="none" stroke="#ffffff" stroke-width="2.3"><rect x="881.6999999999999" y="883.3" width="22.9" height="22.9" rx="1"/><path d="M889.3 883V906.5M897.0 883V906.5M880.4 890.9H905.9M880.4 898.6H905.9"/></g><g fill="none" stroke="#666666"><rect x="952.2" y="883.2" width="25.6" height="23.2" stroke-width="2.4"/><rect x="957.6" y="888.2" width="14.8" height="13.6" stroke-width="2"/><path d="M961 891.9H969M961 895.3H969M961 898.7H969" stroke-width="1.5"/></g><g fill="none" stroke="#666666" stroke-width="2.4"><rect x="1023.5" y="883.2" width="25" height="23.2"/><path d="M1031.7 883V896.2M1039.7 883V896.2H1023.5"/></g><rect x="1088.3" y="893.4" width="15.7" height="4.2" rx="1" fill="#666666"/><rect x="1118.2" y="891.8" width="199.8" height="8" rx="4" fill="#9c9c9c"/><circle cx="1218" cy="896.2" r="16.6" fill="rgba(0,0,0,0.12)"/><circle cx="1218" cy="895.6" r="15.8" fill="#ffffff"/><rect x="1332.3" y="893.4" width="15.6" height="4.2" rx="1" fill="#666666"/><rect x="1338" y="887.7" width="4.2" height="15.6" rx="1" fill="#666666"/></svg>
<div style="position:absolute;top:883.91px;font:400 23.5px/23.5px 'Liberation Sans',sans-serif;color:#525252;white-space:nowrap;letter-spacing:0.392px;left:48.70px;">Ready</div>
<div style="position:absolute;top:885.31px;font:400 23.5px/23.5px 'Liberation Sans',sans-serif;color:#525252;white-space:nowrap;letter-spacing:1.332px;left:1381.50px;">100%</div>
</div>
</body></html>
